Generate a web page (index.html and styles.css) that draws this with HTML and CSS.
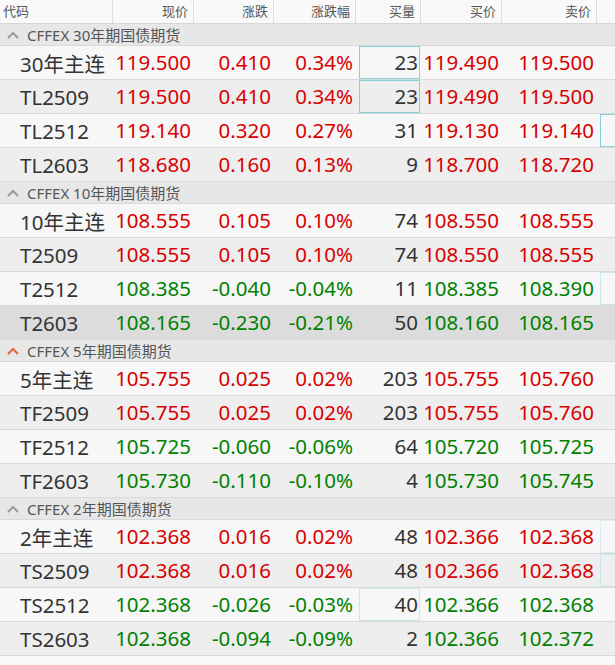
FILE: index.html
```html
<!DOCTYPE html>
<html lang="zh-CN">
<head>
<meta charset="utf-8">
<title>国债期货</title>
<link rel="stylesheet" href="styles.css">
</head>
<body>
<div class="grid">
  <div class="row head">
    <div class="h first">代码</div>
    <div class="h">现价</div>
    <div class="h">涨跌</div>
    <div class="h">涨跌幅</div>
    <div class="h">买量</div>
    <div class="h">买价</div>
    <div class="h">卖价</div>
    <div class="h last"></div>
  </div>

  <div class="row group">
    <svg class="chev" width="12" height="8" viewBox="0 0 12 8"><polyline points="1,7 6,2 11,7" fill="none" stroke="#9a9a9a" stroke-width="2"/></svg>
    <span>CFFEX 30年期国债期货</span>
  </div>
  <div class="row data a">
    <div class="name">30年主连</div><div class="c up">119.500</div><div class="c up">0.410</div><div class="c up">0.34%</div><div class="c vol flash">23</div><div class="c up">119.490</div><div class="c up">119.500</div><div class="c"></div>
  </div>
  <div class="row data b">
    <div class="name">TL2509</div><div class="c up">119.500</div><div class="c up">0.410</div><div class="c up">0.34%</div><div class="c vol flash">23</div><div class="c up">119.490</div><div class="c up">119.500</div><div class="c"></div>
  </div>
  <div class="row data a">
    <div class="name">TL2512</div><div class="c up">119.140</div><div class="c up">0.320</div><div class="c up">0.27%</div><div class="c vol">31</div><div class="c up">119.130</div><div class="c up">119.140</div><div class="c flash"></div>
  </div>
  <div class="row data b">
    <div class="name">TL2603</div><div class="c up">118.680</div><div class="c up">0.160</div><div class="c up">0.13%</div><div class="c vol">9</div><div class="c up">118.700</div><div class="c up">118.720</div><div class="c"></div>
  </div>

  <div class="row group">
    <svg class="chev" width="12" height="8" viewBox="0 0 12 8"><polyline points="1,7 6,2 11,7" fill="none" stroke="#9a9a9a" stroke-width="2"/></svg>
    <span>CFFEX 10年期国债期货</span>
  </div>
  <div class="row data a">
    <div class="name">10年主连</div><div class="c up">108.555</div><div class="c up">0.105</div><div class="c up">0.10%</div><div class="c vol">74</div><div class="c up">108.550</div><div class="c up">108.555</div><div class="c"></div>
  </div>
  <div class="row data b">
    <div class="name">T2509</div><div class="c up">108.555</div><div class="c up">0.105</div><div class="c up">0.10%</div><div class="c vol">74</div><div class="c up">108.550</div><div class="c up">108.555</div><div class="c"></div>
  </div>
  <div class="row data a">
    <div class="name">T2512</div><div class="c down">108.385</div><div class="c down">-0.040</div><div class="c down">-0.04%</div><div class="c vol">11</div><div class="c down">108.385</div><div class="c down">108.390</div><div class="c flash light"></div>
  </div>
  <div class="row data sel">
    <div class="name">T2603</div><div class="c down">108.165</div><div class="c down">-0.230</div><div class="c down">-0.21%</div><div class="c vol">50</div><div class="c down">108.160</div><div class="c down">108.165</div><div class="c"></div>
  </div>

  <div class="row group">
    <svg class="chev" width="12" height="8" viewBox="0 0 12 8"><polyline points="1,7 6,2 11,7" fill="none" stroke="#e8643c" stroke-width="2"/></svg>
    <span>CFFEX 5年期国债期货</span>
  </div>
  <div class="row data a">
    <div class="name">5年主连</div><div class="c up">105.755</div><div class="c up">0.025</div><div class="c up">0.02%</div><div class="c vol">203</div><div class="c up">105.755</div><div class="c up">105.760</div><div class="c"></div>
  </div>
  <div class="row data b">
    <div class="name">TF2509</div><div class="c up">105.755</div><div class="c up">0.025</div><div class="c up">0.02%</div><div class="c vol">203</div><div class="c up">105.755</div><div class="c up">105.760</div><div class="c"></div>
  </div>
  <div class="row data a">
    <div class="name">TF2512</div><div class="c down">105.725</div><div class="c down">-0.060</div><div class="c down">-0.06%</div><div class="c vol">64</div><div class="c down">105.720</div><div class="c down">105.725</div><div class="c"></div>
  </div>
  <div class="row data b">
    <div class="name">TF2603</div><div class="c down">105.730</div><div class="c down">-0.110</div><div class="c down">-0.10%</div><div class="c vol">4</div><div class="c down">105.730</div><div class="c down">105.745</div><div class="c"></div>
  </div>

  <div class="row group">
    <svg class="chev" width="12" height="8" viewBox="0 0 12 8"><polyline points="1,7 6,2 11,7" fill="none" stroke="#9a9a9a" stroke-width="2"/></svg>
    <span>CFFEX 2年期国债期货</span>
  </div>
  <div class="row data a">
    <div class="name">2年主连</div><div class="c up">102.368</div><div class="c up">0.016</div><div class="c up">0.02%</div><div class="c vol">48</div><div class="c up">102.366</div><div class="c up">102.368</div><div class="c flash faint"></div>
  </div>
  <div class="row data b">
    <div class="name">TS2509</div><div class="c up">102.368</div><div class="c up">0.016</div><div class="c up">0.02%</div><div class="c vol">48</div><div class="c up">102.366</div><div class="c up">102.368</div><div class="c flash light"></div>
  </div>
  <div class="row data a">
    <div class="name">TS2512</div><div class="c down">102.368</div><div class="c down">-0.026</div><div class="c down">-0.03%</div><div class="c vol flash light">40</div><div class="c down">102.366</div><div class="c down">102.368</div><div class="c"></div>
  </div>
  <div class="row data b">
    <div class="name">TS2603</div><div class="c down">102.368</div><div class="c down">-0.094</div><div class="c down">-0.09%</div><div class="c vol">2</div><div class="c down">102.366</div><div class="c down">102.372</div><div class="c"></div>
  </div>
</div>
</body>
</html>
```

FILE: styles.css
```css
html, body {
  margin: 0;
  padding: 0;
  background: #f8f8f8;
}
body {
  font-family: "Noto Sans", "Noto Sans CJK SC", sans-serif;
  color: #333;
}
.grid {
  width: 615px;
}
.row {
  display: grid;
  grid-template-columns: 113px 81px 80px 82px 65px 81px 95px 18px;
  box-sizing: border-box;
  border-bottom: 1px solid #d9d9d9;
}
.head {
  height: 24px;
  background: #f9f9f9;
  font-size: 13px;
  color: #555;
  border-bottom-color: #d6d6d6;
}
.h {
  border-right: 1px solid #dedede;
  text-align: right;
  padding-right: 5px;
  line-height: 23px;
  white-space: nowrap;
}
.h.first {
  text-align: left;
  padding-left: 3px;
}
.h.last {
  border-right: none;
}
.group {
  display: flex;
  align-items: center;
  height: 22px;
  background: #e7e7e7;
  font-size: 15px;
  color: #555;
}
.chev {
  margin-left: 7px;
  margin-right: 8px;
  flex: none;
}
.data {
  height: 34px;
  font-size: 20.5px;
  align-items: center;
}
.data.a { background: #f7f7f7; }
.data.b { background: #eeeeee; }
.data.sel { background: #dcdcdc; }
.name {
  padding-left: 20px;
  white-space: nowrap;
}
.c {
  position: relative;
  text-align: right;
  padding-right: 3px;
  white-space: nowrap;
  height: 33px;
  line-height: 33px;
}
.vol { color: #333; }
.up { color: #d80000; }
.down { color: #008000; }
.flash::after {
  content: "";
  position: absolute;
  left: 3px;
  right: 1px;
  top: 0;
  bottom: 0;
  border: 1px solid #86cfdc;
}
.flash.light::after {
  border-color: #c9e8ee;
}
.flash.faint::after {
  border-color: #dcedf1;
}
.c:last-child.flash::after {
  left: 3px;
  right: -2px;
}
```
